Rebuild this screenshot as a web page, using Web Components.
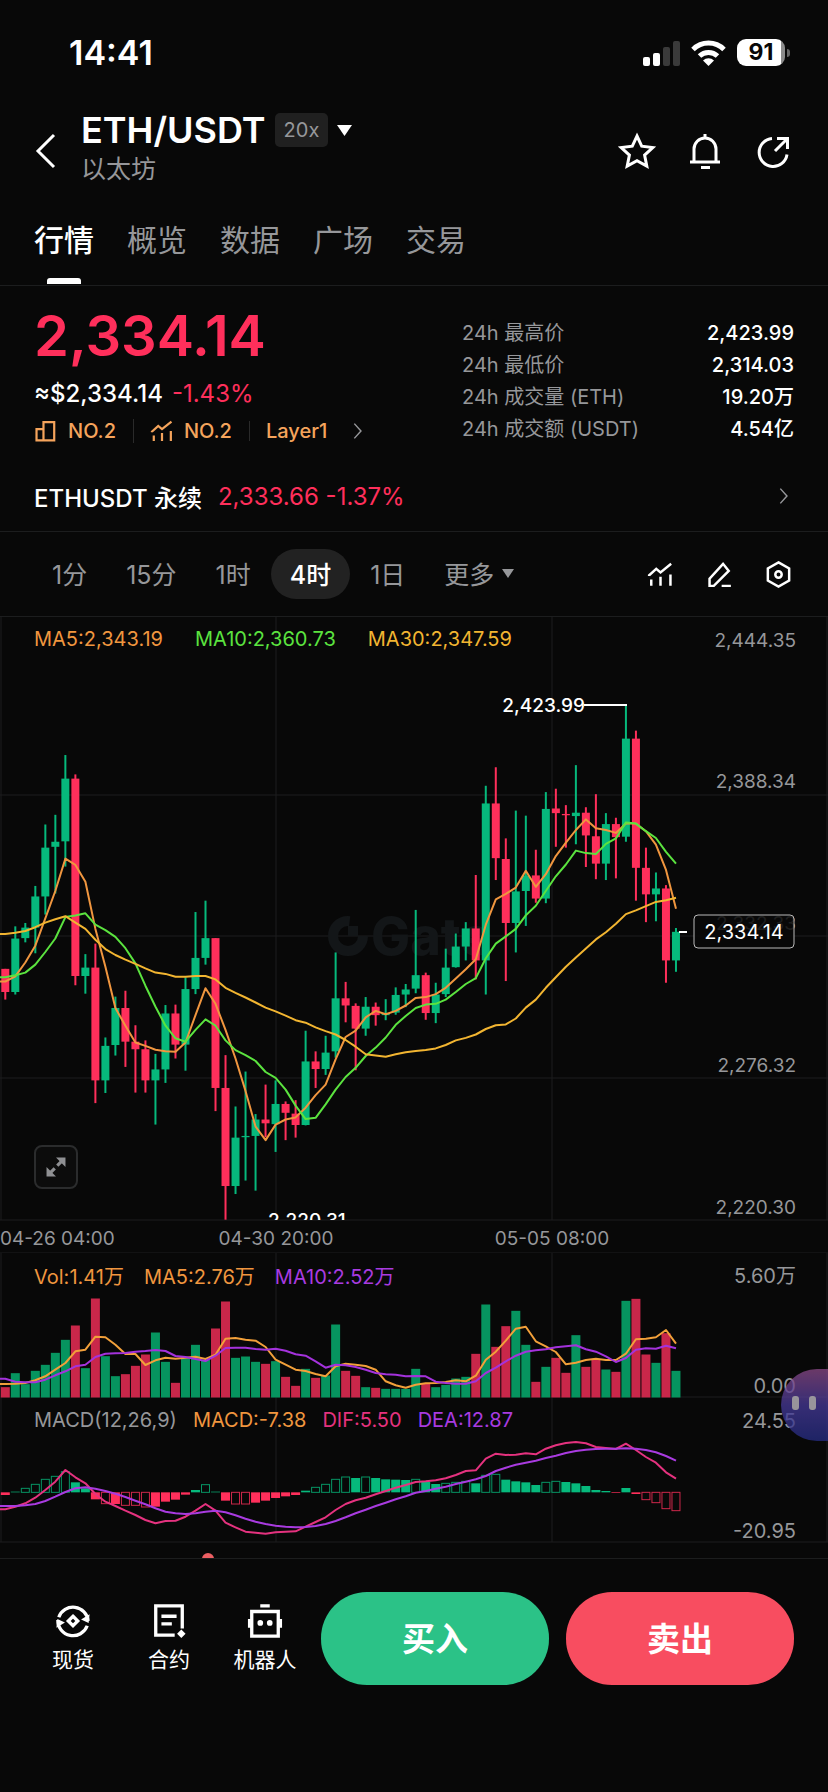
<!DOCTYPE html>
<html lang="zh-CN">
<head>
<meta charset="utf-8">
<meta name="viewport" content="width=device-width, initial-scale=1">
<title>ETH/USDT</title>
<style>
  :root {
    --bg: #080808;
    --line: #1c1d1e;
    --text: #fff;
    --muted: #96979a;
    --up: #06b97c;
    --down: #ff2f5b;
    --pad: 34px;
  }
  body {
    margin: 0;
    min-height: 100vh;
    background: var(--bg);
    color: var(--text);
    font-family: Inter, "Noto Sans CJK SC", sans-serif;
    font-size: 20px;
  }
</style>
</head>
<body>
<trade-page>
  <status-bar slot="top" time="14:41" battery="91"></status-bar>
  <pair-header slot="top" pair="ETH/USDT" leverage="20x">以太坊</pair-header>
  <page-tabs slot="top">
    <button class="active">行情</button>
    <button>概览</button>
    <button>数据</button>
    <button>广场</button>
    <button>交易</button>
  </page-tabs>
  <price-summary></price-summary>
  <perp-link></perp-link>
  <interval-bar></interval-bar>
  <candle-chart>
    <span style="color:#f0963f">MA5:2,343.19</span>
    <span style="color:#5be33f">MA10:2,360.73</span>
    <span style="color:#f2b531">MA30:2,347.59</span>
  </candle-chart>
  <volume-chart>
    <span style="color:#f0963f">Vol:1.41万</span>
    <span style="color:#f0963f">MA5:2.76万</span>
    <span style="color:#a93be0">MA10:2.52万</span>
  </volume-chart>
  <macd-chart>
    <span style="color:#96979a">MACD(12,26,9)</span>
    <span style="color:#f0963f">MACD:-7.38</span>
    <span style="color:#e5327f">DIF:5.50</span>
    <span style="color:#a93be0">DEA:12.87</span>
  </macd-chart>
  <next-panel></next-panel>
  <action-bar slot="bottom">
    <quick-link icon="spot">现货</quick-link>
    <quick-link icon="contract">合约</quick-link>
    <quick-link icon="robot">机器人</quick-link>
    <button slot="trade" class="buy">买入</button>
    <button slot="trade" class="sell">卖出</button>
  </action-bar>
  <float-helper slot="over"></float-helper>
</trade-page>

<script>
const ICONS = {
  back: '<path d="M25 3 9 19l16 16" stroke-width="3"/>',
  star: '<path d="m19 4 4.7 10.2 11.1 1.3-8.2 7.6 2.2 11L19 28.600 9.200 34.100l2.200-11-8.200-7.600 11.100-1.300z" stroke-width="3"/>',
  bell: '<path d="M19 2v4M8 30V17a11 11 0 0 1 22 0v13M4 30h30M15 35.500h9" stroke-width="3"/>',
  share: '<path d="M18 6.500a14 14 0 1 0 15 16M21 19 32 8M23 6.500h10.500V17" stroke-width="3"/>',
  right: '<path d="m14 9 9 10-9 10" stroke-width="2"/>',
  podium: '<path d="M4 16h11v18H4zM15 5h17v29H15z" stroke-width="3.500"/>',
  trend: '<path d="M3 21V20l10-9 6 5L34 4M6 26v9M19 22v13M33 19v16" stroke-width="3.500"/>',
  pencil: '<path d="M5 35h6L32 14 24 4 5 25zM22 35h13" stroke-width="3.500"/>',
  hexagon: '<path d="m19 2 15 8.500v17L19 36 4 27.500v-17z" stroke-width="3.500"/><circle cx="19" cy="19" r="4.500" stroke-width="3.500"/>',
  expand: '<path d="m21 17 8-8M17 21l-8 8" stroke-width="5"/><path d="M19 4h15v15zM4 19v15h15z" fill="currentColor" stroke="none"/>',
  spot: '<path d="M4 15A16 16 0 0 1 35 19M3 18a16 16 0 0 0 31 6" stroke-width="3.500"/><path d="m36.500 12-1 9-8-3.500zM1.500 26l1-9 8 3.500z" fill="currentColor" stroke="none"/><path d="m19 14 5 5-5 5-5-5z" stroke-width="3.500"/>',
  contract: '<path d="M25 34H5V3h28v24M11 14h16M11 22h11" stroke-width="3.500"/><path d="m32 28 4.500 4.500L32 37l-4.500-4.500z" fill="currentColor" stroke="none"/>',
  robot: '<path d="M5 9h28v26H5zM14 3h10" stroke-width="3.500"/><path d="M2.500 17v9M35.500 17v9" stroke-width="3"/><circle cx="14" cy="21" r="3" fill="currentColor" stroke="none"/><circle cx="24" cy="21" r="3" fill="currentColor" stroke="none"/>'
}

// render() fills the shadow root from the class's own css() and html()
class BaseElement extends HTMLElement {
  constructor() {
    super()
    this.attachShadow({ mode: 'open' })
  }
  connectedCallback() {
    this.render()
  }
  render() {
    this.shadowRoot.innerHTML = `
      <style>
        :host { display: block; }
        * { margin: 0; padding: 0; box-sizing: border-box; }
        button { border: 0; background: none; color: inherit; font: inherit; cursor: pointer; }
        a { color: inherit; text-decoration: none; }
        svg { display: block; }
        ${this.css()}
      </style>
      ${this.html()}`
  }
  css() { return '' }
  html() { return '<slot></slot>' }
}

class UiIcon extends BaseElement {
  css() {
    return `
      :host { width: 38px; height: 38px; flex: none; }
      svg { width: 100%; height: 100%; fill: none; stroke: currentColor; overflow: visible; }
    `
  }
  html() {
    return `<svg viewBox="0 0 38 38" aria-hidden="true">${ICONS[this.getAttribute('name')]}</svg>`
  }
}

class TradePage extends BaseElement {
  css() {
    return `
      :host { position: relative; display: flex; flex-direction: column; min-height: 100vh; overflow: hidden; }
      footer { flex: 1; border-top: 1px solid var(--line); }
    `
  }
  html() {
    return `
      <header><slot name="top"></slot></header>
      <main><slot></slot></main>
      <footer><slot name="bottom"></slot></footer>
      <slot name="over"></slot>
    `
  }
}

class StatusBar extends BaseElement {
  css() {
    return `
      :host { display: flex; justify-content: space-between; align-items: center; height: 105px; padding: 0 38px 0 69px; }
      time { font-size: 34px; font-weight: 600; }
      .right { display: flex; align-items: center; gap: 11px; }
      .battery { display: flex; align-items: center; gap: 2px; }
      .level {
        width: 48px; height: 27px; border-radius: 9px;
        background: linear-gradient(90deg, #fff 91%, #8b8b8b 91%);
        color: #080808; font-size: 23px; font-weight: 700; line-height: 27px; text-align: center;
      }
      .tip { width: 3px; height: 8px; border-radius: 0 4px 4px 0; background: #666; }
    `
  }
  html() {
    return `
      <time>${this.getAttribute('time')}</time>
      <div class="right">
        <svg width="38" height="26" viewBox="0 0 38 26">
          <rect x="1" y="17" width="7" height="9" rx="2" fill="#fff"/>
          <rect x="11" y="13" width="7" height="13" rx="2" fill="#fff"/>
          <rect x="21" y="7" width="7" height="19" rx="2" fill="#3a3a3a"/>
          <rect x="31" y="1" width="7" height="25" rx="2" fill="#3a3a3a"/>
        </svg>
        <svg width="35" height="26" viewBox="0 0 35 26" fill="none" stroke="#fff" stroke-width="5">
          <path d="M2 9.500a22 22 0 0 1 31 0M8.500 16a13 13 0 0 1 18 0"/>
          <path d="M17.500 26 12 20.500a8 8 0 0 1 11 0z" fill="#fff" stroke="none"/>
        </svg>
        <div class="battery"><span class="level">${this.getAttribute('battery')}</span><i class="tip"></i></div>
      </div>
    `
  }
}

class PairHeader extends BaseElement {
  css() {
    return `
      :host { display: flex; align-items: center; height: 92px; padding: 0 36px 0 29px; }
      .back { margin-right: 14px; }
      .name { flex: 1; padding-bottom: 10px; }
      .row { display: flex; align-items: center; gap: 9px; height: 46px; }
      h1 { font-size: 36px; font-weight: 600; }
      .lev { height: 34px; padding: 0 9px; border-radius: 5px; background: #202020; color: var(--muted); font-size: 20px; line-height: 34px; }
      p { color: var(--muted); font-size: 25px; line-height: 32px; }
      nav { display: flex; gap: 30px; }
    `
  }
  html() {
    return `
      <button class="back" aria-label="返回"><ui-icon name="back"></ui-icon></button>
      <div class="name">
        <div class="row">
          <h1>${this.getAttribute('pair')}</h1>
          <span class="lev">${this.getAttribute('leverage')}</span>
          <svg width="15" height="11"><path d="M0 0h15L7.500 11z" fill="#fff"/></svg>
        </div>
        <p><slot></slot></p>
      </div>
      <nav>
        <button aria-label="收藏"><ui-icon name="star"></ui-icon></button>
        <button aria-label="提醒"><ui-icon name="bell"></ui-icon></button>
        <button aria-label="分享"><ui-icon name="share"></ui-icon></button>
      </nav>
    `
  }
}

class PageTabs extends BaseElement {
  connectedCallback() {
    super.connectedCallback()
    this.addEventListener('click', e => {
      const target = e.target.closest('button')
      if (!target) return
      this.querySelector('.active').classList.remove('active')
      target.classList.add('active')
    })
  }
  css() {
    return `
      :host { display: flex; gap: 33px; height: 88px; padding: 0 var(--pad); border-bottom: 1px solid var(--line); }
      ::slotted(button) {
        position: relative; width: 60px; height: 87px; padding: 0 0 6px; border: 0; background: none; color: var(--muted);
        font: 400 30px Inter, "Noto Sans CJK SC", sans-serif; white-space: nowrap; cursor: pointer;
      }
      ::slotted(.active) { color: var(--text); font-weight: 500; }
      ::slotted(.active)::after {
        content: ""; position: absolute; left: 13px; bottom: 0; width: 34px; height: 6px; border-radius: 3px 3px 0 0; background: #fff;
      }
    `
  }
}

class PriceSummary extends BaseElement {
  css() {
    return `
      :host { display: flex; justify-content: space-between; align-items: flex-start; padding: 18px var(--pad) 0; }
      .price { height: 68px; color: var(--down); font-size: 56px; font-weight: 600; line-height: 64px; }
      .fiat { display: flex; gap: 9px; font-size: 24px; font-weight: 500; line-height: 44px; }
      .fiat em { color: var(--down); font-style: normal; font-weight: 400; }
      .tags { display: flex; align-items: center; height: 30px; margin-bottom: 2px; color: #f5a45c; font-size: 20px; font-weight: 500; }
      .tags a { display: flex; align-items: center; gap: 10px; padding-right: 17px; }
      .tags a + a { padding-left: 16px; border-left: 1px solid #2a2a2a; line-height: 20px; }
      .tags ui-icon { width: 24px; height: 24px; }
      .tags ui-icon.more { width: 28px; height: 28px; color: var(--muted); }
      dl { display: grid; grid-template-columns: 1fr auto; width: 332px; margin-top: 13px; line-height: 32px; font-size: 20px; }
      dt { color: var(--muted); }
      dd { font-weight: 500; text-align: right; }
    `
  }
  html() {
    return `
      <div>
        <div class="price">2,334.14</div>
        <div class="fiat"><span>≈$2,334.14</span><em>-1.43%</em></div>
        <div class="tags">
          <a href="#"><ui-icon name="podium"></ui-icon>NO.2</a>
          <a href="#"><ui-icon name="trend"></ui-icon>NO.2</a>
          <a href="#">Layer1</a>
          <ui-icon class="more" name="right"></ui-icon>
        </div>
      </div>
      <dl>
        <dt>24h 最高价</dt><dd>2,423.99</dd>
        <dt>24h 最低价</dt><dd>2,314.03</dd>
        <dt>24h 成交量 (ETH)</dt><dd>19.20万</dd>
        <dt>24h 成交额 (USDT)</dt><dd>4.54亿</dd>
      </dl>
    `
  }
}

class PerpLink extends BaseElement {
  css() {
    return `
      :host { border-bottom: 1px solid var(--line); padding: 16px 0 3px; }
      a { display: flex; align-items: center; height: 64px; padding: 0 30px 0 var(--pad); font-size: 24px; font-weight: 500; }
      em { flex: 1; margin-left: 16px; color: var(--down); font-style: normal; font-weight: 400; }
      ui-icon { width: 28px; height: 28px; color: var(--muted); }
    `
  }
  html() {
    return `<a href="#">ETHUSDT 永续<em>2,333.66 -1.37%</em><ui-icon name="right"></ui-icon></a>`
  }
}

class IntervalBar extends BaseElement {
  css() {
    return `
      :host { display: flex; justify-content: space-between; align-items: center; height: 84px; padding: 0 36px 0 33px; color: var(--muted); font-size: 25px; }
      div { display: flex; align-items: center; gap: 1px; }
      button { height: 50px; padding: 0 19px 2px; border-radius: 25px; }
      .active { background: #222; color: var(--text); font-weight: 500; }
      .more { display: flex; align-items: center; gap: 8px; }
      .tools { gap: 32px; color: var(--text); }
      .tools button { padding: 0; }
      .tools ui-icon { width: 27px; height: 27px; }
    `
  }
  html() {
    return `
      <div>
        <button>1分</button>
        <button>15分</button>
        <button>1时</button>
        <button class="active">4时</button>
        <button>1日</button>
        <button class="more">更多<svg width="12" height="9"><path d="M0 0h12L6 9z" fill="currentColor"/></svg></button>
      </div>
      <div class="tools">
        <button aria-label="指标"><ui-icon name="trend"></ui-icon></button>
        <button aria-label="画线"><ui-icon name="pencil"></ui-icon></button>
        <button aria-label="设置"><ui-icon name="hexagon"></ui-icon></button>
      </div>
    `
  }
}

// Every plot shares one 828 unit wide grid, one bar each 10 units
const WIDTH = 828
const barX = i => 5.3 + i * 10.01

class PlotElement extends BaseElement {
  line(values, color, y) {
    const points = [[0, values[0]], ...values.map((v, i) => [barX(i), v])]
    return `<polyline points="${points.map(([x, v]) => `${x.toFixed(1)},${y(v).toFixed(1)}`).join(' ')}" fill="none" stroke="${color}" stroke-width="2" stroke-linejoin="round"/>`
  }
  grid(height, rows) {
    const v = [1, 276, 552, 827].map(x => `M${x} 0V${height}`).join('')
    const h = rows.map(y => `M0 ${y}H${WIDTH}`).join('')
    return `<path d="${v}${h}" stroke="#1c1d1e" fill="none"/>`
  }
  label(text, y) {
    return `<text x="796" y="${y}" text-anchor="end" class="axis">${text}</text>`
  }
  css() {
    return `
      :host { display: grid; font-size: 20px; }
      svg.plot { grid-area: 1 / 1; width: 100%; height: auto; }
      .legend { grid-area: 1 / 1; display: flex; align-items: center; align-self: start; height: 44px; padding: 0 var(--pad); gap: 18px; position: relative; }
      text { font-size: 20px; fill: #fff; }
      .axis { fill: var(--muted); }
    `
  }
}

// [up, high, body top, body bottom, low], in feed steps down the screen
const CANDLES = [
  [0, 875, 875, 930, 948], [1, 774, 803, 930, 936], [1, 766, 777, 802, 812], [1, 678, 703, 777, 838],
  [1, 532, 587, 703, 746], [1, 509, 573, 585, 696], [1, 367, 423, 572, 632], [0, 413, 423, 892, 914],
  [1, 840, 872, 892, 934], [0, 815, 872, 1140, 1194], [1, 1038, 1058, 1140, 1170], [1, 941, 968, 1056, 1081],
  [0, 927, 968, 1048, 1108], [0, 1009, 1048, 1066, 1169], [0, 1045, 1066, 1140, 1169], [1, 1077, 1114, 1140, 1245],
  [1, 961, 981, 1114, 1146], [0, 960, 981, 1055, 1088], [1, 895, 923, 1055, 1117], [1, 740, 849, 923, 935],
  [1, 713, 802, 849, 865], [0, 802, 802, 1158, 1213], [0, 1080, 1158, 1391, 1471], [1, 1202, 1276, 1391, 1410],
  [1, 1119, 1272, 1275, 1378], [1, 1220, 1233, 1272, 1402], [0, 1150, 1233, 1242, 1275], [1, 1140, 1196, 1244, 1310],
  [0, 1190, 1196, 1217, 1282], [0, 1187, 1219, 1246, 1276], [1, 1022, 1095, 1246, 1247], [0, 1071, 1095, 1113, 1158],
  [1, 1034, 1074, 1113, 1127], [1, 836, 945, 1071, 1086], [0, 906, 945, 962, 1002], [0, 957, 963, 1017, 1116],
  [1, 942, 965, 1017, 1034], [0, 955, 965, 985, 1010], [1, 947, 981, 985, 997], [1, 919, 937, 979, 984],
  [1, 911, 924, 936, 966], [1, 735, 890, 922, 933], [0, 884, 890, 980, 996], [1, 908, 936, 980, 1004],
  [1, 827, 872, 935, 942], [1, 791, 822, 871, 872], [1, 764, 779, 822, 855], [0, 652, 779, 855, 900],
  [1, 440, 482, 855, 936], [0, 396, 482, 612, 664], [0, 565, 614, 766, 904], [1, 499, 691, 766, 836],
  [1, 511, 653, 690, 773], [0, 592, 653, 708, 718], [1, 455, 495, 708, 719], [0, 447, 494, 505, 585],
  [0, 486, 507, 510, 587], [1, 391, 504, 512, 579], [0, 491, 504, 558, 633], [0, 460, 560, 625, 662],
  [1, 505, 531, 625, 664], [0, 516, 531, 562, 660], [1, 249, 328, 561, 573], [0, 309, 328, 635, 713],
  [0, 587, 635, 698, 764], [1, 646, 684, 698, 762], [0, 676, 684, 855, 908], [1, 778, 787, 855, 882]
]
const MA5 = [905, 893, 860, 820, 755, 690, 613, 628, 668, 780, 870, 968, 1010, 1050, 1058, 1067, 1071, 1072, 1050, 985, 921, 958, 1020, 1088, 1165, 1250, 1282, 1245, 1233, 1228, 1205, 1175, 1150, 1090, 1037, 1022, 990, 975, 983, 975, 962, 944, 942, 935, 920, 898, 876, 852, 770, 710, 697, 682, 642, 680, 650, 607, 575, 545, 520, 541, 545, 552, 530, 530, 548, 580, 640, 732]
const MA10 = [895, 890, 884, 865, 835, 803, 752, 748, 743, 770, 783, 799, 826, 862, 915, 965, 1010, 1040, 1048, 1020, 995, 1010, 1045, 1068, 1080, 1094, 1120, 1134, 1162, 1200, 1232, 1229, 1197, 1162, 1132, 1110, 1082, 1062, 1038, 1008, 987, 968, 960, 958, 948, 930, 911, 897, 850, 815, 798, 780, 748, 725, 690, 655, 627, 594, 600, 602, 578, 565, 527, 530, 548, 564, 597, 625]
const MA30 = [792, 789, 785, 776, 765, 757, 750, 765, 780, 806, 828, 842, 853, 863, 874, 884, 887, 894, 894, 892, 892, 900, 920, 932, 943, 955, 967, 976, 986, 997, 1003, 1014, 1023, 1031, 1044, 1060, 1078, 1081, 1084, 1078, 1073, 1070, 1068, 1064, 1056, 1045, 1039, 1031, 1018, 1009, 1007, 993, 967, 948, 920, 895, 870, 848, 827, 805, 788, 768, 745, 736, 726, 716, 712, 706]

class CandleChart extends PlotElement {
  css() {
    return `
      ${super.css()}
      :host { border-top: 1px solid var(--line); }
      .legend { gap: 32px; }
      text { font-size: 19px; }
      .brand { font-size: 52px; font-weight: 800; fill: #131618; }
      .mark { font-weight: 500; }
      .tag { fill: rgba(8, 8, 8, .85); stroke: #b9b9b9; }
      .now { font-size: 20px; }
      .full {
        grid-area: 1 / 1; align-self: end; justify-self: start; position: relative; margin: 0 0 64px var(--pad);
        padding: 8px; border: 2px solid #2b2c2d; border-radius: 8px; background: #0c0c0c; color: #8f9093;
      }
      .full ui-icon { width: 24px; height: 24px; }
    `
  }
  html() {
    const y = v => (v - 39) / 2.376
    const candles = CANDLES.map(([up, high, top, bottom, low], i) => {
      const x = barX(i)
      const color = up ? 'var(--up)' : 'var(--down)'
      const height = Math.max(y(bottom) - y(top), 1)
      return `<rect x="${x - 1}" y="${y(high)}" width="2" height="${y(low) - y(high)}" fill="${color}"/>
        <rect x="${x - 4}" y="${y(top)}" width="8" height="${height}" fill="${color}"/>`
    }).join('')
    return `
      <svg class="plot" viewBox="0 0 828 636">
        ${this.grid(603, [178, 319, 461, 603, 636])}
        <circle cx="348" cy="319" r="15" fill="none" stroke="#131618" stroke-width="10" stroke-dasharray="72 23"/>
        <path d="M348 309h10v10h-10z" fill="#131618"/>
        <text class="brand" x="371" y="338">Gate</text>
        ${candles}
        ${this.line(MA5, '#f0963f', y)}
        ${this.line(MA10, '#5be33f', y)}
        ${this.line(MA30, '#f2b531', y)}
        ${this.label('2,444.35', 30)}
        ${this.label('2,388.34', 171)}
        ${this.label('2,332.33', 313)}
        ${this.label('2,276.32', 455)}
        ${this.label('2,220.30', 597)}
        <path d="M584 88h43M679 315h8" stroke="#fff" stroke-width="2"/>
        <rect class="tag" x="694" y="298" width="100" height="33" rx="4"/>
        <text class="now" x="744" y="322" text-anchor="middle">2,334.14</text>
        <text class="mark" x="585" y="95" text-anchor="end">2,423.99</text>
        <svg width="828" height="603"><text class="mark" x="268" y="610">2,220.31</text></svg>
        <text class="axis" x="0" y="628">04-26 04:00</text>
        <text class="axis" x="276" y="628" text-anchor="middle">04-30 20:00</text>
        <text class="axis" x="552" y="628" text-anchor="middle">05-05 08:00</text>
      </svg>
      <div class="legend"><slot></slot></div>
      <button class="full" aria-label="全屏"><ui-icon name="expand"></ui-icon></button>
    `
  }
}

// thirds of a unit above the base line
const VOLUME = [31, 73, 40, 80, 98, 134, 173, 216, 88, 297, 124, 64, 70, 95, 129, 195, 107, 44, 118, 158, 113, 207, 288, 119, 123, 107, 101, 109, 62, 35, 86, 59, 66, 219, 80, 65, 31, 29, 26, 26, 26, 86, 43, 31, 38, 57, 62, 131, 279, 152, 214, 260, 158, 47, 92, 119, 74, 187, 92, 114, 84, 77, 290, 296, 129, 104, 193, 80]
const VOL_MA5 = [463, 462, 460, 452, 440, 420, 400, 365, 360, 321, 323, 345, 373, 373, 406, 392, 384, 387, 384, 381, 388, 375, 327, 325, 330, 333, 352, 390, 405, 420, 424, 433, 440, 410, 402, 405, 409, 420, 455, 467, 474, 465, 461, 460, 457, 452, 455, 438, 390, 366, 333, 297, 291, 335, 350, 367, 404, 399, 391, 387, 391, 391, 372, 329, 327, 323, 301, 342]
const VOL_MA10 = [447, 456, 458, 458, 450, 437, 425, 410, 405, 382, 372, 371, 370, 366, 364, 361, 364, 379, 382, 388, 394, 378, 355, 354, 354, 358, 360, 357, 363, 374, 378, 395, 414, 405, 407, 412, 420, 430, 434, 435, 440, 439, 440, 456, 460, 462, 462, 455, 430, 414, 395, 378, 366, 362, 359, 353, 350, 347, 359, 366, 380, 397, 385, 360, 356, 357, 348, 356]

class VolumeChart extends PlotElement {
  css() {
    return `
      ${super.css()}
      .legend { gap: 20px; }
    `
  }
  html() {
    const y = v => (v - 70) / 3
    const bars = VOLUME.map((v, i) =>
      `<rect x="${barX(i) - 4.5}" y="${144.5 - v / 3}" width="9" height="${v / 3}" fill="${CANDLES[i][0] ? '#06945f' : '#c9274a'}"/>`
    ).join('')
    return `
      <svg class="plot" viewBox="0 0 828 145">
        ${this.grid(145, [144])}
        ${bars}
        ${this.line(VOL_MA5, '#f2a03a', y)}
        ${this.line(VOL_MA10, '#a432dc', y)}
        ${this.label('5.60万', 30)}
        ${this.label('0.00', 140)}
      </svg>
      <div class="legend"><slot></slot></div>
    `
  }
}

const MACD = [-8, 2, 12, 24, 39, 48, 62, 30, 12, -21, -34, -35, -39, -39, -44, -43, -28, -22, -7, 7, 23, 2, -25, -35, -35, -31, -25, -17, -12, -8, 5, 15, 24, 39, 46, 43, 46, 43, 39, 38, 37, 39, 32, 25, 27, 30, 33, 27, 51, 54, 38, 33, 30, 22, 30, 33, 31, 27, 19, 7, 4, -2, 13, -5, -22, -31, -49, -55]
const HOLLOW = [2, 3, 4, 5, 6, 10, 12, 13, 14, 20, 23, 24, 31, 32, 33, 34, 36, 41, 44, 45, 46, 48, 49, 54, 55, 64, 65, 66, 67]
const DIF = [838, 830, 820, 803, 780, 755, 720, 742, 760, 792, 815, 828, 842, 855, 870, 880, 873, 872, 860, 842, 822, 842, 878, 892, 905, 908, 911, 907, 905, 904, 890, 876, 862, 840, 822, 811, 803, 793, 783, 773, 765, 756, 754, 751, 745, 735, 723, 721, 686, 671, 675, 674, 670, 673, 656, 646, 639, 636, 640, 651, 654, 657, 641, 660, 681, 698, 727, 746]
const DEA = [828, 828, 826, 822, 813, 800, 786, 775, 772, 776, 783, 791, 801, 812, 823, 835, 845, 850, 852, 850, 845, 842, 847, 856, 866, 875, 882, 887, 890, 892, 891, 888, 882, 873, 862, 850, 839, 828, 818, 808, 799, 788, 783, 776, 770, 762, 755, 748, 738, 723, 713, 704, 698, 692, 684, 677, 669, 663, 659, 657, 656, 656, 655, 656, 660, 667, 678, 692]

class MacdChart extends PlotElement {
  css() {
    return `
      ${super.css()}
      .legend { gap: 16px; }
    `
  }
  html() {
    const y = v => (v - 504) / 3
    const zero = y(787)
    const bars = MACD.map((v, i) => {
      const color = v > 0 ? 'var(--up)' : 'var(--down)'
      const h = Math.abs(v) / 3
      const top = v > 0 ? zero - h : zero
      return HOLLOW.includes(i)
        ? `<rect x="${barX(i) - 4}" y="${top}" width="8" height="${h}" fill="none" stroke="${color}" stroke-opacity=".8"/>`
        : `<rect x="${barX(i) - 4.5}" y="${top}" width="9" height="${h}" fill="${color}"/>`
    }).join('')
    return `
      <svg class="plot" viewBox="0 0 828 145">
        ${this.grid(144, [144])}
        ${bars}
        ${this.line(DIF, '#e5327f', y)}
        ${this.line(DEA, '#a93be0', y)}
        ${this.label('24.55', 30)}
        ${this.label('-20.95', 140)}
      </svg>
      <div class="legend"><slot></slot></div>
    `
  }
}

// the top edge of the panel that the footer cuts off
class NextPanel extends BaseElement {
  css() {
    return `
      :host { height: 15px; padding: 0 202px; overflow: hidden; }
      i { display: block; width: 12px; height: 12px; margin-top: 10px; border-radius: 50%; background: #ec5f63; }
    `
  }
  html() { return '<i></i>' }
}

class QuickLink extends BaseElement {
  css() {
    return `
      a { display: flex; flex-direction: column; align-items: center; gap: 6px; font-size: 21px; line-height: 30px; white-space: nowrap; }
      ui-icon { width: 36px; height: 36px; }
    `
  }
  html() {
    return `<a href="#"><ui-icon name="${this.getAttribute('icon')}"></ui-icon><slot></slot></a>`
  }
}

class ActionBar extends BaseElement {
  css() {
    return `
      :host { display: flex; align-items: center; padding: 33px var(--pad) 106px 25px; }
      .links { display: grid; grid-template-columns: repeat(3, 96px); width: 296px; }
      .trade { flex: 1; display: flex; gap: 17px; }
      ::slotted(button) {
        flex: 1; height: 93px; padding: 0 0 4px; border: 0; border-radius: 46px; color: #fff; cursor: pointer;
        font: 700 33px Inter, "Noto Sans CJK SC", sans-serif;
      }
      ::slotted(.buy) { background: #2bc287; }
      ::slotted(.sell) { background: #f84d60; }
    `
  }
  html() {
    return `
      <nav class="links"><slot></slot></nav>
      <div class="trade"><slot name="trade"></slot></div>
    `
  }
}

class FloatHelper extends BaseElement {
  css() {
    return `
      :host { position: absolute; right: 0; top: 1369px; opacity: .75; }
      button {
        display: flex; gap: 10px; width: 47px; height: 72px; padding: 27px 0 0 11px; border-radius: 36px 0 0 36px;
        background: linear-gradient(#8c4a88, #473a9a 50%, #262d84);
      }
      i { width: 7px; height: 14px; border-radius: 3px; background: #c8c4cc; }
    `
  }
  html() { return '<button aria-label="助手"><i></i><i></i></button>' }
}

customElements.define('ui-icon', UiIcon)
customElements.define('trade-page', TradePage)
customElements.define('status-bar', StatusBar)
customElements.define('pair-header', PairHeader)
customElements.define('page-tabs', PageTabs)
customElements.define('price-summary', PriceSummary)
customElements.define('perp-link', PerpLink)
customElements.define('interval-bar', IntervalBar)
customElements.define('candle-chart', CandleChart)
customElements.define('volume-chart', VolumeChart)
customElements.define('macd-chart', MacdChart)
customElements.define('next-panel', NextPanel)
customElements.define('quick-link', QuickLink)
customElements.define('action-bar', ActionBar)
customElements.define('float-helper', FloatHelper)
</script>
</body>
</html>
